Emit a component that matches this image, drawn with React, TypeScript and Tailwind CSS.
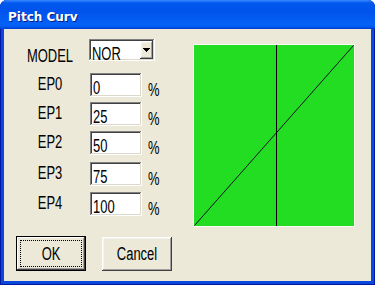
import React from "react";

const T =
  "inline-block scale-x-[0.72] font-['Liberation_Sans',Arial,sans-serif] text-[18px] leading-[18px] text-black whitespace-nowrap";
const SUNKEN =
  "shadow-[inset_-1px_-1px_#ffffff,inset_1px_1px_#808080,inset_-2px_-2px_#dcd9cc,inset_2px_2px_#404040]";
const RAISED =
  "shadow-[inset_-1px_-1px_#404040,inset_1px_1px_#ffffff,inset_-2px_-2px_#a0a0a0,inset_2px_2px_#f4f3ee]";

function Field({ label, value, mt }: { label: string; value: string; mt: string }) {
  return (
    <div className={"flex h-[24px] " + mt}>
      <div className="w-[60px] flex justify-center items-start pt-[2px]">
        <span className={T + " origin-center"}>{label}</span>
      </div>
      <div className={"ml-[10px] w-[52px] h-[24px] bg-white pl-[3px] pt-[3px] " + SUNKEN}>
        <span className={T + " origin-left"}>{value}</span>
      </div>
      <div className="ml-[6px] pt-[5px]">
        <span className={T + " origin-left"}>%</span>
      </div>
    </div>
  );
}

export default function App() {
  return (
    <div className="w-[375px] h-[285px] flex flex-col rounded-t-[7px] overflow-hidden bg-[#0A48DC] shadow-[inset_0_0_0_1px_#0019A0]">
      <div className="h-[29px] shrink-0 flex items-center pl-[8px] pt-[4px] bg-[linear-gradient(180deg,#3a8cff,#0058ee_10%,#0053ec_40%,#0562f6_85%,#0058f0_93%,#0046d8_97%,#003dd0)]">
        <span className="font-['DejaVu_Sans',Verdana,sans-serif] font-bold text-[12px] leading-[14px] text-white [text-shadow:1px_1px_#0a1a8a]">
          Pitch Curv
        </span>
      </div>
      <div className="flex-1 mx-[4px] mb-[4px] bg-[#ECE9D8] flex flex-col pt-[10px]">
        <div className="flex items-start">
          <div className="w-[189px] pl-[16px] flex flex-col">
            <div className="flex h-[22px]">
              <div className="w-[60px] flex justify-center items-start pt-[8px]">
                <span className={T + " origin-center"}>MODEL</span>
              </div>
              <div className={"ml-[9px] w-[66px] h-[22px] bg-white p-[2px] flex " + SUNKEN}>
                <div className="flex-1 pl-[1px] pt-[1px]">
                  <span className={T + " origin-left"}>NOR</span>
                </div>
                <div className={"w-[13px] h-full bg-[#ECE9D8] flex items-center justify-center " + RAISED}>
                  <svg width="7" height="4" viewBox="0 0 7 4" shapeRendering="crispEdges">
                    <path d="M0 0h7v1H0zM1 1h5v1H1zM2 2h3v1H2zM3 3h1v1H3z" fill="#000" />
                  </svg>
                </div>
              </div>
            </div>
            <Field label="EP0" value="0" mt="mt-[12px]" />
            <Field label="EP1" value="25" mt="mt-[5px]" />
            <Field label="EP2" value="50" mt="mt-[5px]" />
            <Field label="EP3" value="75" mt="mt-[7px]" />
            <Field label="EP4" value="100" mt="mt-[6px]" />
          </div>
          <div className="mt-[5px] w-[162px] h-[183px] border border-[#fbfaf4] bg-[#22DD22]">
            <svg width="160" height="181" viewBox="0 0 160 181" className="block">
              <line x1="82.5" y1="0" x2="82.5" y2="181" stroke="#000" strokeWidth="1" />
              <line x1="0.5" y1="180.5" x2="159.5" y2="0.5" stroke="#101020" strokeWidth="1" />
            </svg>
          </div>
        </div>
        <div className="flex items-start pl-[12px] mt-[9px]">
          <div className="relative w-[70px] h-[35px] bg-[#ECE9D8] flex items-center justify-center shadow-[inset_0_0_0_1px_#000,inset_-2px_-2px_#404040,inset_2px_2px_#ffffff,inset_-3px_-3px_#a0a0a0]">
            <div className="absolute inset-[4px] border border-dotted border-black" />
            <span className={T + " origin-center"}>OK</span>
          </div>
          <div className={"ml-[16px] mt-[1px] w-[70px] h-[34px] bg-[#ECE9D8] flex items-center justify-center " + RAISED}>
            <span className={T + " origin-center"}>Cancel</span>
          </div>
        </div>
      </div>
    </div>
  );
}
